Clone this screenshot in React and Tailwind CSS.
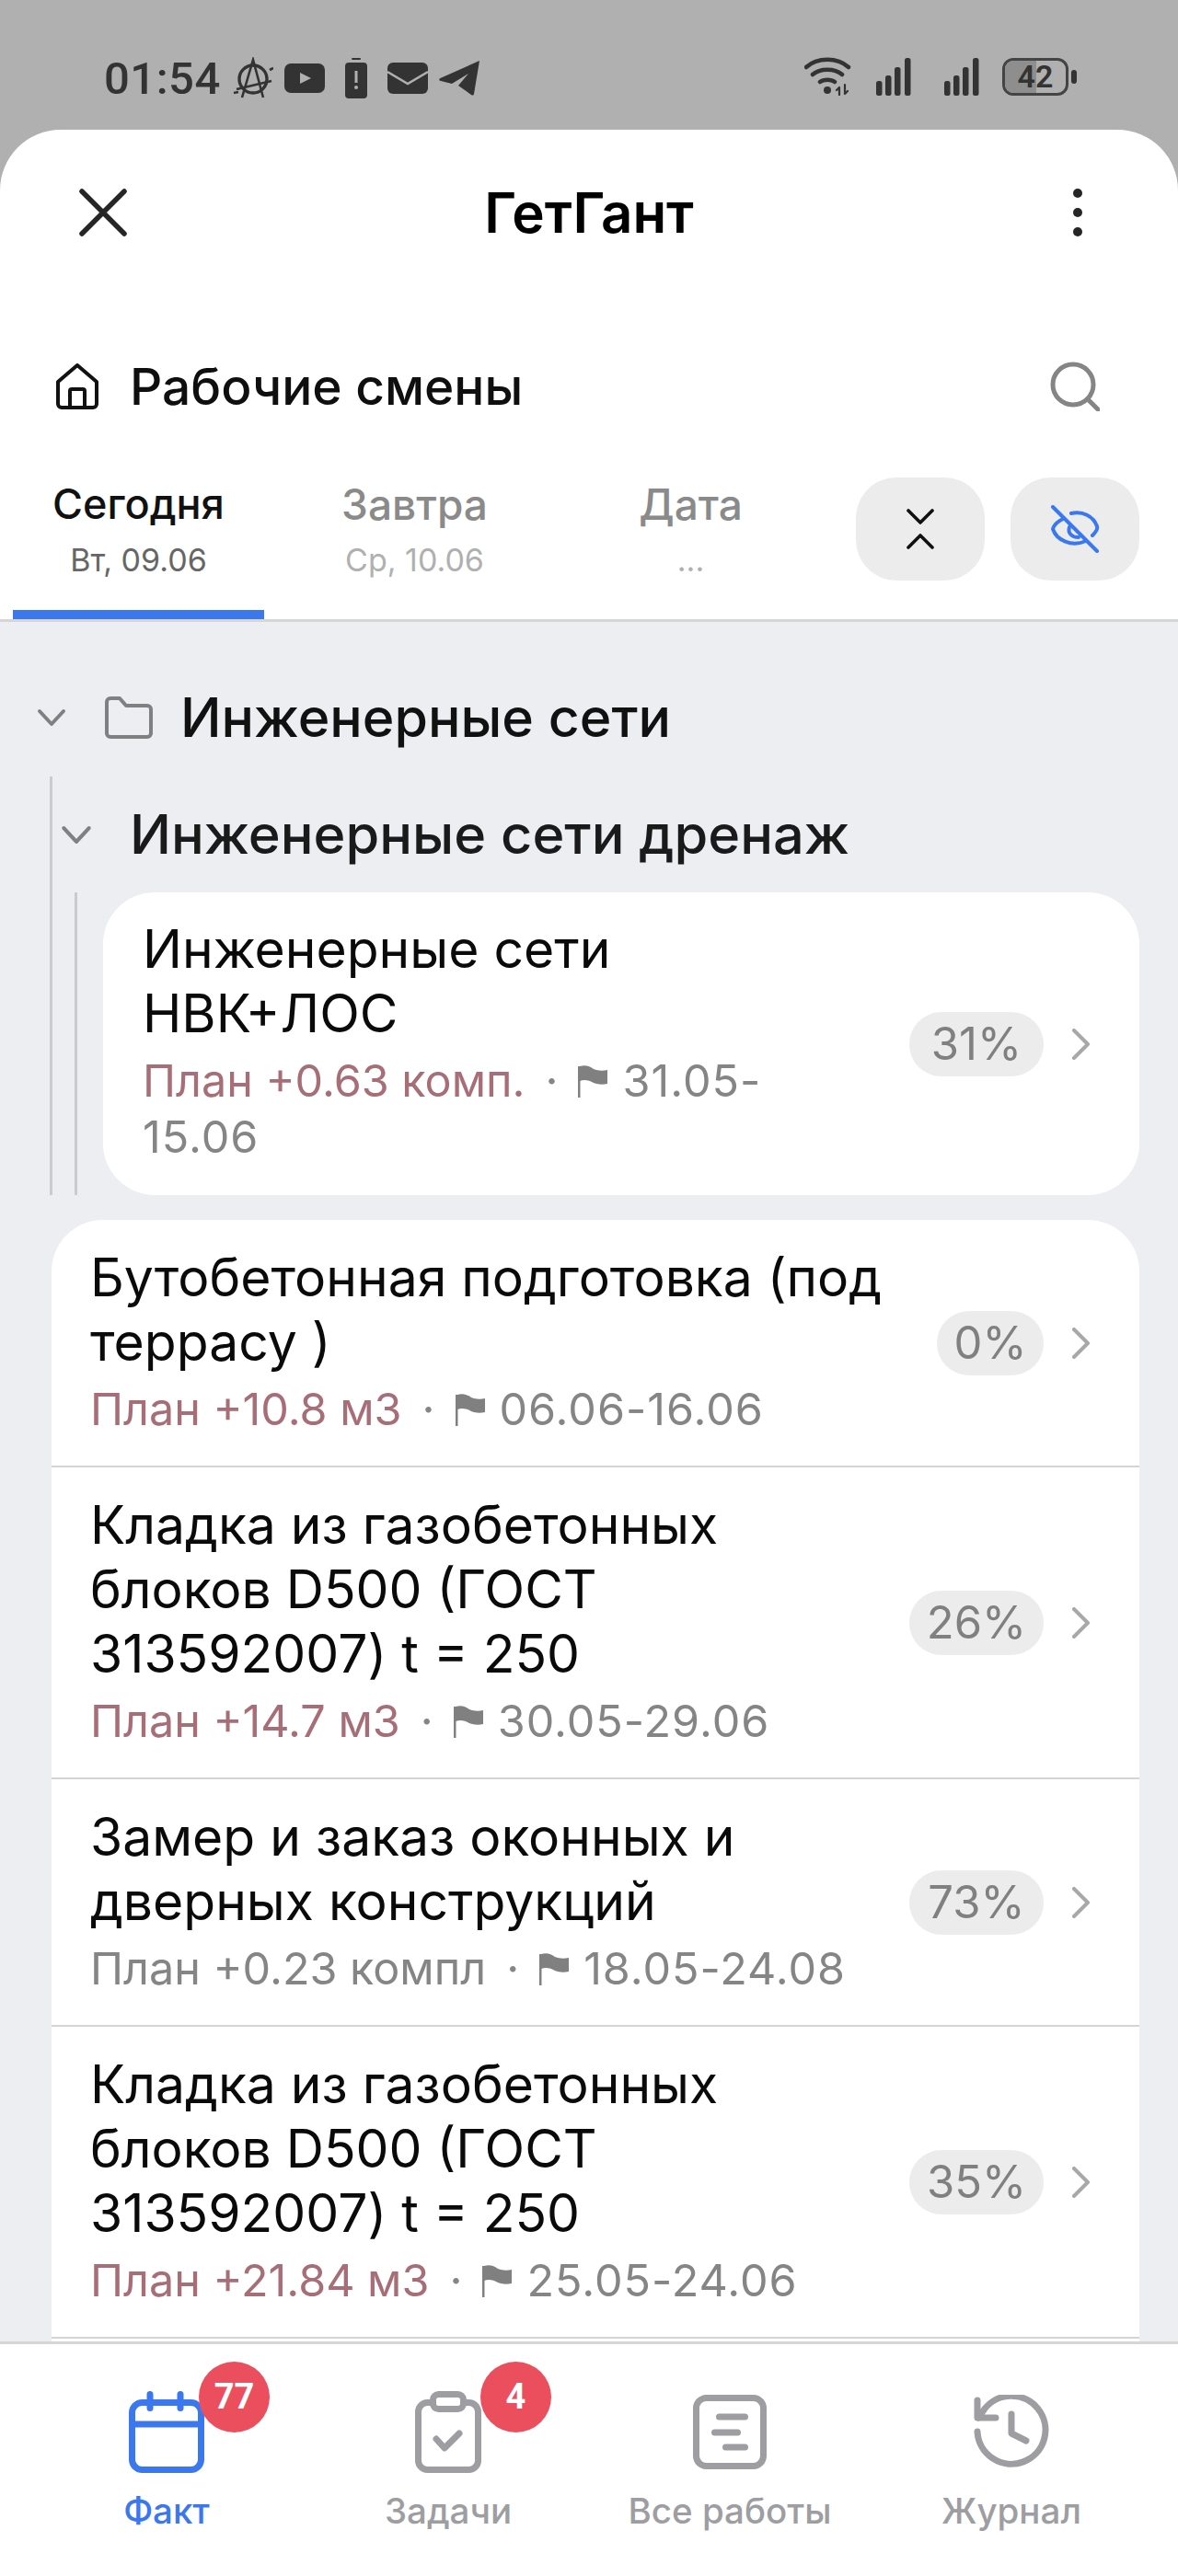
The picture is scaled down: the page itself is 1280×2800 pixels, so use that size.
// App.jsx
const font = { fontFamily: '"Inter", "Noto Sans", sans-serif' };

const rows = [
  { title: 'Бутобетонная подготовка (под террасу )', plan: 'План +10.8 м3', date: '06.06-16.06', pct: '0%', late: true },
  { title: 'Кладка из газобетонных блоков D500 (ГОСТ 313592007) t = 250', plan: 'План +14.7 м3', date: '30.05-29.06', pct: '26%', late: true },
  { title: 'Замер и заказ оконных и дверных конструкций', plan: 'План +0.23 компл', date: '18.05-24.08', pct: '73%', late: false },
  { title: 'Кладка из газобетонных блоков D500 (ГОСТ 313592007) t = 250', plan: 'План +21.84 м3', date: '25.05-24.06', pct: '35%', late: true },
];

function Chevron({ className }) {
  return (
    <svg viewBox="0 0 32 20" className={className} fill="none" stroke="currentColor" strokeWidth="4" strokeLinecap="round" strokeLinejoin="round">
      <path d="M3 3l13 14L29 3" />
    </svg>
  );
}

function Flag() {
  return (
    <svg viewBox="0 0 32 35" className="inline-block w-[32px] h-[35px] align-[-1px] text-[#808080]" fill="currentColor">
      <path d="M0 1h2.5v34H0z" />
      <path d="M2 1C8-1 13 1 17 4c5 2 10 2 15 1v15c-5 1-10 1-15-1-5-3-10-4-15-2z" />
    </svg>
  );
}

function Meta({ plan, date, tail, late }) {
  return (
    <div className="mt-[7px] text-[48.5px] leading-[61px] text-[#858585]">
      <span className={late ? 'text-[#a76e78]' : ''}>{plan}</span>
      <span className="mx-[22px]">·</span>
      <Flag />
      <span className="ml-[16px] tracking-[1px]">{date}</span>
      {tail && <span className="block tracking-[1px]">{tail}</span>}
    </div>
  );
}

function Percent({ value, className }) {
  return (
    <div className="flex items-center shrink-0 ml-auto">
      <span className={`h-[70px] rounded-full bg-[#ececec] flex items-center justify-center text-[49px] text-[#808080] ${className}`}>{value}</span>
      <svg viewBox="0 0 22 34" className="w-[22px] h-[34px] ml-[30px] text-[#a8a8a8]" fill="none" stroke="currentColor" strokeWidth="4" strokeLinecap="round" strokeLinejoin="round">
        <path d="M3 2l15 15L3 32" />
      </svg>
    </div>
  );
}

function WorkRow({ row }) {
  return (
    <div className="flex items-center pl-[42px] pr-[52px] border-b-[2px] border-[#d4d4d4]">
      <div className="flex-1 min-w-0 pr-[32px] pt-[28px] pb-[31px]">
        <div className="text-[57px] leading-[70px] text-[#0a0a0a]">{row.title}</div>
        <Meta plan={row.plan} date={row.date} late={row.late} />
      </div>
      <Percent value={row.pct} className={row.pct === '0%' ? 'w-[116px]' : 'w-[146px]'} />
    </div>
  );
}

function StatusIcons() {
  return (
    <div className="flex items-center text-[#333333]">
      <svg viewBox="0 0 44 46" className="w-[44px] h-[46px] ml-[13px]" fill="none" stroke="currentColor" strokeWidth="3.4">
        <circle cx="22" cy="24" r="15" />
        <path d="M10 44L22 3l11 41M4 35l38-9M40 14l4-2M6 38l-5 1" strokeWidth="2.6" />
      </svg>
      <svg viewBox="0 0 44 32" className="w-[44px] h-[32px] ml-[12px]">
        <rect width="44" height="32" rx="7" fill="currentColor" />
        <path d="M17 10l12 6-12 6z" fill="#b0b0b0" />
      </svg>
      <svg viewBox="0 0 24 44" className="w-[24px] h-[44px] ml-[22px]" fill="currentColor">
        <rect x="7" y="0" width="10" height="2" rx="1" />
        <rect x="0" y="5" width="24" height="39" rx="4" />
        <rect x="10.5" y="14" width="3" height="13" fill="#b0b0b0" />
        <circle cx="12" cy="32" r="2" fill="#b0b0b0" />
      </svg>
      <svg viewBox="0 0 44 34" className="w-[44px] h-[34px] ml-[22px]">
        <rect width="44" height="34" rx="6" fill="currentColor" />
        <path d="M0 10l22 13L44 10" fill="none" stroke="#b0b0b0" strokeWidth="2.4" />
      </svg>
      <svg viewBox="0 0 44 38" className="w-[44px] h-[38px] ml-[12px]" fill="currentColor">
        <path d="M44 0L38 36c-.3 1.6-1.6 2-3 1L21 27l11-13-18 11-12-3c-2-.5-2.4-2-.6-3z" />
      </svg>
    </div>
  );
}

function StatusRight() {
  const bars = [
    [1, 16],
    [11, 22],
    [21, 31],
    [32, 41],
  ];
  return (
    <div className="flex items-center text-[#333333]">
      <svg viewBox="0 0 52 42" className="w-[52px] h-[42px]" fill="none" stroke="currentColor" strokeLinecap="round" strokeWidth="4.5">
        <path d="M2 11C14 0 36 0 48 11M9 19c8-7 24-7 32 0M17 27c4-3 12-3 16 0" />
        <circle cx="25" cy="36" r="4" fill="currentColor" stroke="none" />
        <path d="M38 34v7M44 30v10M35 36l3-3M47 37l-3 3" strokeWidth="2.2" />
      </svg>
      {[0, 1].map((i) => (
        <svg key={i} viewBox="0 0 47 41" className={`w-[47px] h-[41px] ${i === 0 ? 'ml-[25px]' : 'ml-[27px]'}`} fill="currentColor">
          {bars.map(([x, h]) => (
            <rect key={x} x={x} y={41 - h} width="6.5" height={h} rx="2.5" />
          ))}
        </svg>
      ))}
      <div className="relative ml-[17px] w-[72px] h-[41px] rounded-[12px] border-[3px] border-[#444444] overflow-hidden flex items-center justify-center">
        <div className="absolute inset-y-0 left-0 w-[34px] bg-[#8e8e8e]" />
        <span className="relative text-[34px] leading-none font-semibold text-[#333333]" style={{ fontFamily: 'Roboto, sans-serif' }}>42</span>
      </div>
      <div className="ml-[3px] w-[6px] h-[15px] rounded-full bg-[#333333]" />
    </div>
  );
}

function NavItem({ label, active, badge, icon }) {
  return (
    <div className={`relative flex flex-col items-center ${active ? 'text-[#3b78ee]' : 'text-[#9d9da2]'}`}>
      <div className="h-[89px] w-[90px] flex items-center justify-center">{icon}</div>
      {badge && (
        <span className="absolute left-[calc(50%+35px)] top-[-32px] w-[77px] h-[77px] rounded-full bg-[#eb4f5e] text-white text-[38px] font-bold flex items-center justify-center" style={{ fontFamily: 'Roboto, sans-serif' }}>
          {badge}
        </span>
      )}
      <div className="mt-[16px] text-[38.5px] leading-[50px] font-medium">{label}</div>
    </div>
  );
}

export default function App() {
  return (
    <div className="w-[1280px] h-[2800px] bg-[#b0b0b0] flex flex-col overflow-hidden" style={font}>
      {/* status bar */}
      <div className="h-[141px] shrink-0 flex items-start justify-between pt-[62px] pl-[113px] pr-[110px]">
        <div className="flex items-center h-[46px]">
          <span className="text-[49px] leading-none font-medium text-[#333333] tracking-[0.5px]" style={{ fontFamily: 'Roboto, sans-serif' }}>01:54</span>
          <StatusIcons />
        </div>
        <StatusRight />
      </div>

      <div className="flex-1 flex flex-col bg-white rounded-t-[66px] overflow-hidden">
        {/* header */}
        <div className="h-[180px] shrink-0 flex items-center pl-[86px] pr-[104px]">
          <div className="w-[180px]">
            <svg viewBox="0 0 52 52" className="w-[52px] h-[52px] text-[#262626]" fill="none" stroke="currentColor" strokeWidth="5.5" strokeLinecap="round">
              <path d="M3 3l46 46M49 3L3 49" />
            </svg>
          </div>
          <div className="flex-1 text-center pl-[18px] text-[60px] font-semibold text-black">ГетГант</div>
          <div className="w-[180px] flex justify-end">
            <svg viewBox="0 0 10 52" className="w-[10px] h-[52px] text-[#262626]" fill="currentColor">
              <circle cx="5" cy="5" r="5" />
              <circle cx="5" cy="26" r="5" />
              <circle cx="5" cy="47" r="5" />
            </svg>
          </div>
        </div>

        {/* section title */}
        <div className="h-[198px] shrink-0 flex items-center pl-[61px] pr-[85px]">
          <svg viewBox="0 0 46 50" className="w-[46px] h-[50px] text-[#111111]" fill="none" stroke="currentColor" strokeWidth="4" strokeLinejoin="round">
            <path d="M2 20L23 2l21 18v24a4 4 0 0 1-4 4H6a4 4 0 0 1-4-4z" />
            <path d="M15 48V30a2 2 0 0 1 2-2h12a2 2 0 0 1 2 2v18" />
          </svg>
          <div className="ml-[34px] text-[55px] font-medium text-[#0f0f0f]">Рабочие смены</div>
          <svg viewBox="0 0 54 54" className="ml-auto w-[54px] h-[54px] text-[#858585]" fill="none" stroke="currentColor" strokeWidth="5" strokeLinecap="round">
            <circle cx="25" cy="25" r="22" />
            <path d="M41 41l11 11" />
          </svg>
        </div>

        {/* tabs */}
        <div className="h-[157px] shrink-0 flex border-b-[3px] border-[#d6d6d6] pl-[14px] pr-[42px]">
          <div className="w-[273px] flex flex-col items-center">
            <div className="text-[45px] leading-[58px] font-medium text-[#111111]">Сегодня</div>
            <div className="text-[34px] leading-[44px] mt-[10px] text-[#666666]">Вт, 09.06</div>
            <div className="mt-auto w-full h-[10px] bg-[#3b78ee]" />
          </div>
          <div className="w-[273px] ml-[27px] flex flex-col items-center">
            <div className="text-[46px] leading-[58px] font-medium text-[#8a8a8a]">Завтра</div>
            <div className="text-[34px] leading-[44px] mt-[10px] text-[#b0b0b0]">Ср, 10.06</div>
          </div>
          <div className="w-[273px] ml-[27px] flex flex-col items-center">
            <div className="text-[46px] leading-[58px] font-medium text-[#8a8a8a]">Дата</div>
            <div className="text-[34px] leading-[44px] mt-[10px] text-[#b0b0b0]">...</div>
          </div>
          <div className="ml-auto flex gap-[28px]">
            <div className="w-[140px] h-[112px] rounded-[44px] bg-[#ececec] flex items-center justify-center">
              <svg viewBox="0 0 30 44" className="w-[30px] h-[44px] text-[#111111]" fill="none" stroke="currentColor" strokeWidth="3.6" strokeLinecap="round" strokeLinejoin="round">
                <path d="M2 2l13 13L28 2M2 42l13-13 13 13" />
              </svg>
            </div>
            <div className="w-[140px] h-[112px] rounded-[44px] bg-[#ececec] flex items-center justify-center">
              <svg viewBox="0 0 54 52" className="w-[54px] h-[52px] text-[#3b78ee]" fill="none" stroke="currentColor" strokeWidth="4" strokeLinecap="round" strokeLinejoin="round">
                <path d="M3 2l48 48" />
                <path d="M23 9c12-3 24 3 28 14 1 3-1 6-5 10" />
                <path d="M14 15C8 18 4 22 3 26c4 12 20 20 36 13" />
                <path d="M21 24c-2 6 2 11 10 11" />
              </svg>
            </div>
          </div>
        </div>

        {/* list */}
        <div className="flex-1 bg-[#eceef2] overflow-hidden pt-[40px]">
          <div className="h-[128px] flex items-center pl-[40px]">
            <Chevron className="w-[32px] h-[20px] text-[#808080]" />
            <svg viewBox="0 0 52 46" className="ml-[42px] w-[52px] h-[46px] text-[#808080]" fill="none" stroke="currentColor" strokeWidth="4" strokeLinejoin="round">
              <path d="M2 6a4 4 0 0 1 4-4h10l7 8h23a4 4 0 0 1 4 4v26a4 4 0 0 1-4 4H6a4 4 0 0 1-4-4z" />
            </svg>
            <div className="ml-[30px] text-[59px] font-medium text-[#111111]">Инженерные сети</div>
          </div>

          <div className="ml-[54px] mr-[42px] border-l-[3px] border-[#c9cbce]">
            <div className="h-[126px] flex items-center pl-[9px]">
              <Chevron className="w-[34px] h-[21px] text-[#808080]" />
              <div className="ml-[41px] text-[59.5px] font-medium text-[#1a1a1a]">Инженерные сети дренаж</div>
            </div>
            <div className="ml-[24px] border-l-[3px] border-[#c9cbce] pl-[28px]">
              <div className="bg-white rounded-[56px] flex items-center pl-[43px] pr-[52px]">
                <div className="w-[700px] shrink-0 pt-[27px] pb-[33px]">
                  <div className="text-[57px] leading-[70px] text-[#0a0a0a]">Инженерные сети НВК+ЛОС</div>
                  <Meta plan="План +0.63 комп." date="31.05-" tail="15.06" late />
                </div>
                <Percent value="31%" className="w-[146px]" />
              </div>
            </div>
          </div>

          <div className="mt-[27px] ml-[56px] mr-[42px] bg-white rounded-t-[56px]">
            {rows.map((row, i) => (
              <WorkRow key={i} row={row} />
            ))}
            <div className="h-[20px]" />
          </div>
        </div>

        {/* bottom nav */}
        <div className="h-[255px] shrink-0 bg-white border-t-[3px] border-[#d6d6d6] grid grid-cols-4 px-[28px] pt-[51px]">
          <NavItem
            label="Факт"
            active
            badge="77"
            icon={
              <svg viewBox="0 0 82 89" className="w-[82px] h-[89px]" fill="none" stroke="currentColor" strokeWidth="7" strokeLinecap="round">
                <rect x="3.5" y="12.5" width="75" height="73" rx="11" />
                <path d="M3.5 36h75M23 3.5v15M56 3.5v15" />
              </svg>
            }
          />
          <NavItem
            label="Задачи"
            badge="4"
            icon={
              <svg viewBox="0 0 72 89" className="w-[72px] h-[89px]" fill="none" stroke="currentColor" strokeWidth="7" strokeLinecap="round" strokeLinejoin="round">
                <rect x="3.5" y="12.5" width="65" height="73" rx="10" />
                <rect x="19.5" y="3.5" width="33" height="16" rx="6" fill="white" />
                <path d="M23 52l9 10 16-16" />
              </svg>
            }
          />
          <NavItem
            label="Все работы"
            icon={
              <svg viewBox="0 0 80 81" className="w-[80px] h-[81px]" fill="none" stroke="currentColor" strokeWidth="7" strokeLinecap="round">
                <rect x="3.5" y="3.5" width="73" height="74" rx="11" />
                <path d="M28.5 24h28M23.5 41h25M35.5 57h21" />
              </svg>
            }
          />
          <NavItem
            label="Журнал"
            icon={
              <svg viewBox="0 0 82 82" className="w-[82px] h-[82px]" fill="none" stroke="currentColor" strokeWidth="7" strokeLinecap="round" strokeLinejoin="round">
                <path d="M4 6v19h20" />
                <path d="M5 25l5-7A37 37 0 1 1 4 40" />
                <path d="M41 21v21l16 8" />
              </svg>
            }
          />
        </div>
      </div>
    </div>
  );
}
